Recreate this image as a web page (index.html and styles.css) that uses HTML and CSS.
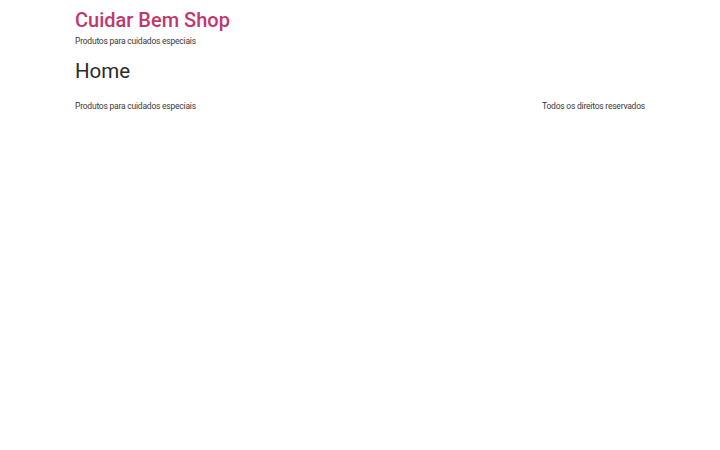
FILE: index.html
```html
<!DOCTYPE html>
<html lang="pt">
<head>
<meta charset="utf-8">
<link rel="stylesheet" href="styles.css">
</head>
<body>
<div class="page">
  <header class="site-header">
    <h1 class="site-title">Cuidar Bem Shop</h1>
    <p class="site-desc">Produtos para cuidados especiais</p>
  </header>
  <main class="content">
    <h2 class="page-title">Home</h2>
  </main>
  <footer class="site-footer">
    <p>Produtos para cuidados especiais</p>
    <p>Todos os direitos reservados</p>
  </footer>
</div>
</body>
</html>
```
FILE: styles.css
```css
html, body { margin: 0; padding: 0; background: #fff; }
body { font-family: Roboto, "Noto Sans", sans-serif; color: #3a3a3a; }
.page { width: 570px; margin: 0 auto; }
.site-header { padding-top: 6px; }
.site-title { margin: 0; font-size: 20px; font-weight: 500; color: #c0386b; line-height: 28px; }
.site-desc { margin: 1px 0 0; font-size: 8.5px; letter-spacing: -0.22px; line-height: 12px; color: #3a3a3a; }
.content { padding-top: 10px; }
.page-title { margin: 0; font-size: 20.5px; font-weight: 400; color: #2b2b2b; line-height: 28px; }
.site-footer { display: flex; justify-content: space-between; margin-top: 15px; font-size: 8.5px; letter-spacing: -0.22px; line-height: 12px; }
.site-footer p { margin: 0; }
```
